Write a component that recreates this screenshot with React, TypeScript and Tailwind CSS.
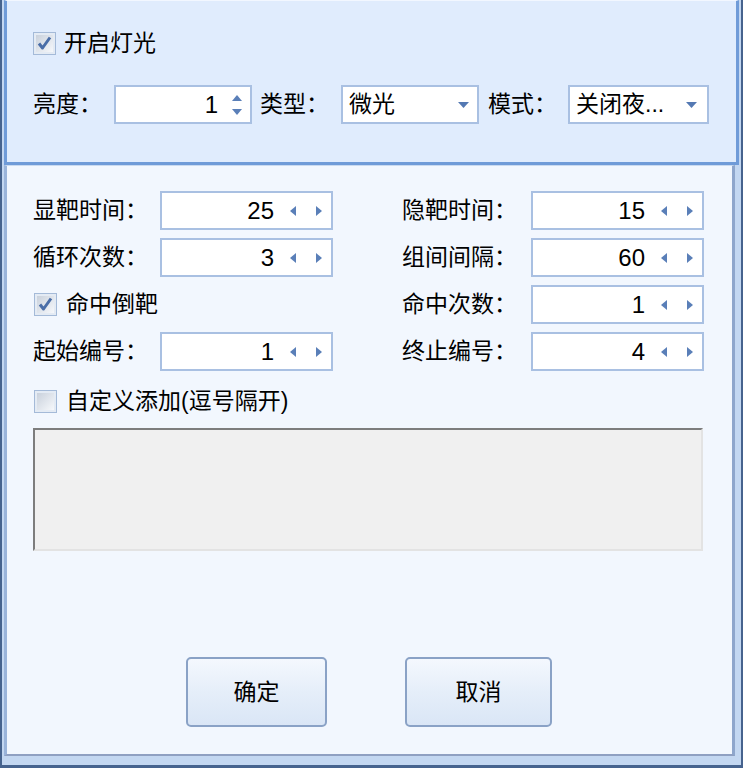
import React from "react";

const FONT = { fontFamily: '"Liberation Sans", "Noto Sans CJK SC", sans-serif' };

function CheckBox({ checked }: { checked: boolean }) {
  return (
    <svg width="23" height="23" viewBox="0 0 23 23" className="shrink-0">
      <defs>
        <linearGradient id={checked ? "cbg1" : "cbg0"} x1="0" y1="0" x2="1" y2="1">
          <stop offset="0" stopColor="#c9d1dc" />
          <stop offset="1" stopColor="#f6f8fb" />
        </linearGradient>
      </defs>
      <rect x="0.5" y="0.5" width="22" height="22" fill="#e4ebf4" stroke="#a4bad8" />
      <rect x="3" y="3" width="17" height="17" fill={`url(#${checked ? "cbg1" : "cbg0"})`} />
      {checked && (
        <path d="M6 11.5 L9.5 16 L17 5.5" fill="none" stroke="#4a6ea8" strokeWidth="3" strokeLinejoin="round" />
      )}
    </svg>
  );
}

function DownArrow() {
  return (
    <svg width="11" height="6" viewBox="0 0 11 6">
      <path d="M0 0 H11 L5.5 6 Z" fill="#5479b3" />
    </svg>
  );
}

function LeftRight() {
  return (
    <div className="flex items-center gap-[20px] ml-[16px] mr-[9px]">
      <svg width="6" height="10" viewBox="0 0 6 10">
        <path d="M6 0 V10 L0 5 Z" fill="#5a7fb8" />
      </svg>
      <svg width="6" height="10" viewBox="0 0 6 10">
        <path d="M0 0 V10 L6 5 Z" fill="#5a7fb8" />
      </svg>
    </div>
  );
}

function Spin({ value }: { value: string }) {
  return (
    <div className="w-[173px] h-[39px] border-2 border-[#a9c0e2] bg-white flex items-center justify-end">
      <span className="text-[24px] leading-none">{value}</span>
      <LeftRight />
    </div>
  );
}

function Field({ label, value }: { label: string; value: string }) {
  return (
    <div className="flex items-center justify-between h-[39px]">
      <span className="text-[23px] leading-none">{label}</span>
      <Spin value={value} />
    </div>
  );
}

function Button({ label, w }: { label: string; w: string }) {
  return (
    <div
      className={`${w} h-[70px] rounded-[5px] border-2 border-[#8aa2c6] bg-linear-to-b from-[#f4f8fe] via-[#e5eef9] to-[#dae6f6] flex items-center justify-center text-[23px]`}
    >
      {label}
    </div>
  );
}

export default function App() {
  return (
    <div
      style={FONT}
      className="w-[743px] h-[768px] flex flex-col bg-[#c3d7f1] border-l-2 border-r-2 border-b-[3px] border-[#46638e] pl-[2px] pr-[2px] pb-[9px] text-black overflow-hidden"
    >
      {/* top panel */}
      <div className="h-[165px] shrink-0 bg-[#e0ecfd] border-t border-t-[#f2f7ff] border-l-[3px] border-r-[3px] border-b-[3px] border-l-[#6f9bd8] border-r-[#6f9bd8] border-b-[#6f9bd8] pl-[26px] pr-[24px] pt-[30px]">
        <div className="flex items-center gap-[8px] h-[24px]">
          <CheckBox checked />
          <span className="text-[23px] leading-none">开启灯光</span>
        </div>
        <div className="flex items-center mt-[30px] h-[39px]">
          <span className="text-[23px] leading-none w-[81px]">亮度：</span>
          <div className="w-[138px] h-[39px] border-2 border-[#a9c0e2] bg-white flex items-center justify-end">
            <span className="text-[24px] leading-none">1</span>
            <div className="flex flex-col items-center gap-[8px] ml-[14px] mr-[8px]">
              <svg width="10" height="6" viewBox="0 0 10 6">
                <path d="M0 6 H10 L5 0 Z" fill="#5a7fb8" />
              </svg>
              <svg width="10" height="6" viewBox="0 0 10 6">
                <path d="M0 0 H10 L5 6 Z" fill="#5a7fb8" />
              </svg>
            </div>
          </div>
          <span className="text-[23px] leading-none ml-[8px] w-[81px]">类型：</span>
          <div className="w-[138px] h-[39px] border-2 border-[#a9c0e2] bg-white flex items-center justify-between pl-[6px] pr-[8px]">
            <span className="text-[23px] leading-none">微光</span>
            <DownArrow />
          </div>
          <span className="text-[23px] leading-none ml-[9px] w-[80px]">模式：</span>
          <div className="w-[141px] h-[39px] border-2 border-[#a9c0e2] bg-white flex items-center justify-between pl-[6px] pr-[10px]">
            <span className="text-[23px] leading-none">关闭夜...</span>
            <DownArrow />
          </div>
        </div>
      </div>

      {/* bottom panel */}
      <div className="flex-1 flex flex-col bg-[#f2f7fe] border-t border-t-[#c9daf0] border-l-[3px] border-r-[3px] border-b-2 border-l-[#9ab4da] border-r-[#8ea6cc] border-b-[#8fa0c2] pl-[26px] pt-[25px] mr-[4px]">
        <div className="grid grid-cols-[300px_302px] gap-x-[69px] gap-y-[8px]">
          <Field label="显靶时间：" value="25" />
          <Field label="隐靶时间：" value="15" />
          <Field label="循环次数：" value="3" />
          <Field label="组间间隔：" value="60" />
          <div className="flex items-center gap-[9px] h-[39px] pl-[1px]">
            <CheckBox checked />
            <span className="text-[23px] leading-none">命中倒靶</span>
          </div>
          <Field label="命中次数：" value="1" />
          <Field label="起始编号：" value="1" />
          <Field label="终止编号：" value="4" />
        </div>

        <div className="flex items-center gap-[9px] mt-[19px] pl-[1px] h-[23px]">
          <CheckBox checked={false} />
          <span className="text-[23px] leading-none">自定义添加(逗号隔开)</span>
        </div>

        <div className="mt-[15px] w-[670px] h-[123px] bg-[#f0f0f0] border-t-2 border-l-2 border-t-[#7d7d7d] border-l-[#7d7d7d] border-b-2 border-r-2 border-b-[#e3e3e3] border-r-[#e3e3e3]" />

        <div className="flex gap-[78px] mt-[106px] ml-[153px]">
          <Button label="确定" w="w-[141px]" />
          <Button label="取消" w="w-[147px]" />
        </div>
      </div>
    </div>
  );
}
